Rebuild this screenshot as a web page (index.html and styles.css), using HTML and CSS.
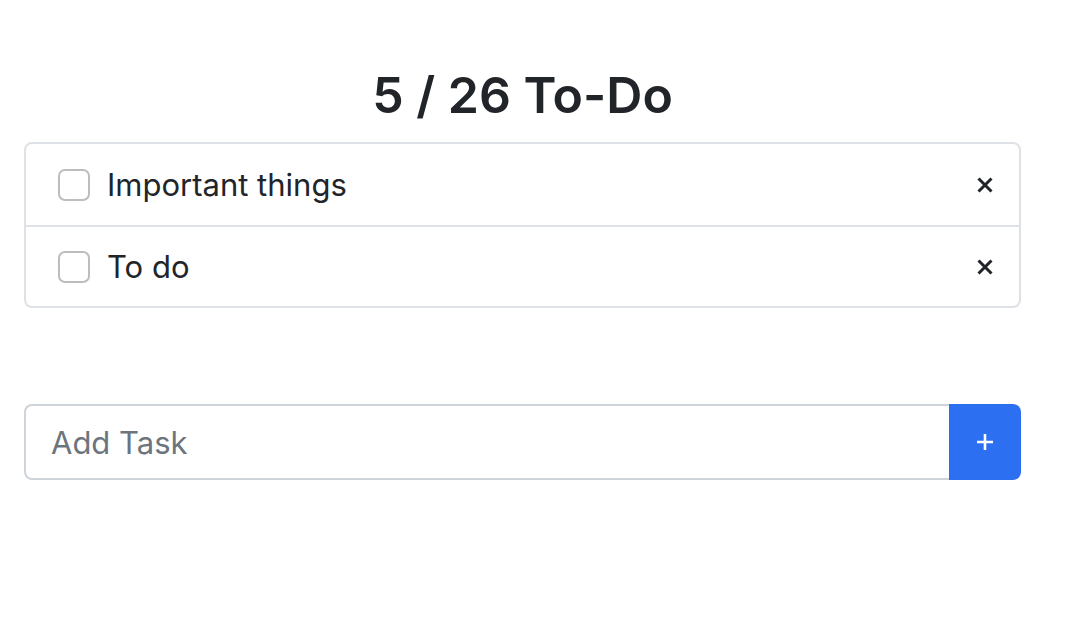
FILE: index.html
```html
<!DOCTYPE html>
<html lang="en">
<head>
<meta charset="utf-8">
<title>To-Do</title>
<link rel="stylesheet" href="styles.css">
</head>
<body>
<main class="app">
  <h1 class="title">5 / 26 To-Do</h1>
  <ul class="list">
    <li class="item">
      <span class="check"></span>
      <span class="label">Important things</span>
      <button class="remove" type="button" aria-label="Remove">
        <svg width="18" height="18" viewBox="0 0 18 18"><path d="M2.5 2.5L15.5 15.5M15.5 2.5L2.5 15.5" stroke="#212529" stroke-width="3"/></svg>
      </button>
    </li>
    <li class="item">
      <span class="check"></span>
      <span class="label">To do</span>
      <button class="remove" type="button" aria-label="Remove">
        <svg width="18" height="18" viewBox="0 0 18 18"><path d="M2.5 2.5L15.5 15.5M15.5 2.5L2.5 15.5" stroke="#212529" stroke-width="3"/></svg>
      </button>
    </li>
  </ul>
  <form class="add">
    <input class="add-input" type="text" placeholder="Add Task">
    <button class="add-btn" type="button" aria-label="Add">
      <svg width="18" height="18" viewBox="0 0 18 18"><path d="M9 1V17M1 9H17" stroke="#fff" stroke-width="2.6"/></svg>
    </button>
  </form>
</main>
</body>
</html>
```
FILE: styles.css
```css
* { box-sizing: border-box; }
body {
  margin: 0;
  font-family: Inter, "Noto Sans", sans-serif;
  color: #212529;
  background: #fff;
}
.app {
  width: 997px;
  margin-left: 24px;
  padding-top: 62px;
}
.title {
  margin: 0 0 13px;
  text-align: center;
  font-size: 50px;
  font-weight: 600;
  line-height: 67px;
}
.list {
  list-style: none;
  margin: 0;
  padding: 0;
  border: 2px solid #dee2e6;
  border-radius: 8px;
}
.item {
  display: flex;
  align-items: center;
  height: 81px;
  padding: 0 25px 0 32px;
}
.item + .item { border-top: 2px solid #dee2e6; }
.check {
  width: 32px;
  height: 32px;
  border: 2px solid #bdbdbd;
  border-radius: 7px;
  flex: none;
}
.label {
  flex: 1;
  margin-left: 17px;
  font-size: 31px;
}
.remove {
  display: flex;
  border: 0;
  background: none;
  padding: 0;
}
.add {
  display: flex;
  margin-top: 96px;
  height: 76px;
}
.add-input {
  flex: 1;
  border: 2px solid #ced4da;
  border-right: 0;
  border-radius: 8px 0 0 8px;
  padding: 0 25px;
  font-family: inherit;
  font-size: 31px;
  color: #212529;
}
.add-input::placeholder { color: #6c757d; }
.add-btn {
  display: flex;
  align-items: center;
  justify-content: center;
  width: 72px;
  border: 0;
  border-radius: 0 8px 8px 0;
  background: #2c70f1;
}
```
